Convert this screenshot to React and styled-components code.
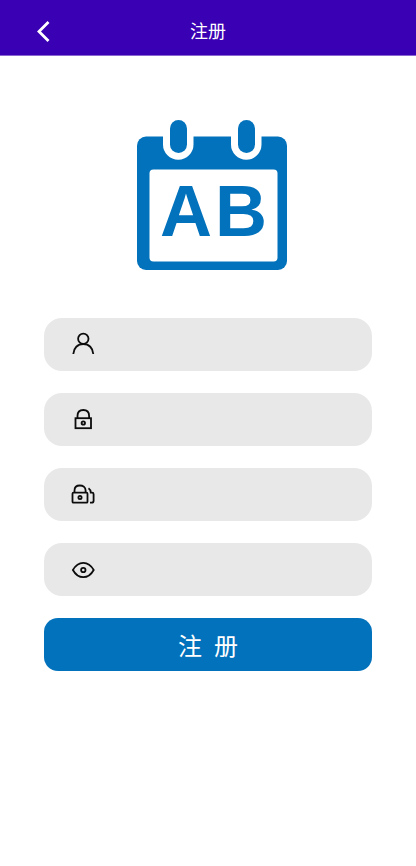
import React from "react";
import styled, { createGlobalStyle } from "styled-components";

const GlobalStyle = createGlobalStyle`
  * { box-sizing: border-box; }
  body {
    margin: 0;
    background: #fff;
    font-family: Roboto, "Noto Sans CJK SC", sans-serif;
  }
`;

const Header = styled.header`
  display: grid;
  grid-template-columns: 48px 1fr 48px;
  align-items: center;
  height: 56px;
  padding: 8px 20px 0;
  background: #3a00b3;
  border-bottom: 1px solid #8a66d0;
  color: #fff;
`;

const BackButton = styled.button`
  display: flex;
  align-items: center;
  justify-content: center;
  height: 42px;
  padding: 0;
  border: 0;
  background: none;
  color: inherit;
`;

const Title = styled.h1`
  margin: 0;
  font-size: 18px;
  line-height: 24px;
  font-weight: 400;
  text-align: center;
`;

const Main = styled.main`
  display: flex;
  flex-direction: column;
  align-items: center;
  gap: 48px;
  padding: 64px 44px;
`;

const Logo = styled.svg`
  display: block;
  margin-left: 8px;
`;

const LogoText = styled.text`
  font-family: "Liberation Sans", Arial, sans-serif;
  font-size: 72px;
  font-weight: 700;
  fill: #0272bc;
`;

const Form = styled.form`
  display: flex;
  flex-direction: column;
  gap: 22px;
  width: 100%;
`;

const Field = styled.label`
  display: flex;
  align-items: center;
  gap: 16px;
  height: 53px;
  padding: 0 27px;
  border-radius: 18px;
  background: #e8e8e8;
`;

const Icon = styled.svg`
  flex: none;
  width: 25px;
  height: 25px;
  fill: none;
  stroke: #0c0c0c;
  stroke-width: 1.8;
`;

const Input = styled.input`
  flex: 1;
  min-width: 0;
  border: 0;
  outline: 0;
  background: transparent;
  font: inherit;
  font-size: 16px;
`;

const Submit = styled.button`
  height: 53px;
  border: 0;
  border-radius: 14px;
  background: #0272bc;
  color: #fff;
  font: inherit;
  font-size: 24px;
  white-space: pre;
`;

const fields = [
  {
    name: "username",
    label: "用户名",
    type: "text",
    icon: (
      <>
        <circle cx="12.3" cy="6.8" r="5.2" />
        <path d="M2.3 22c.3-6 4.4-10 10-10s9.7 4 10 10" />
      </>
    ),
  },
  {
    name: "password",
    label: "密码",
    type: "password",
    icon: (
      <>
        <rect x="4.5" y="11.2" width="15.5" height="10" />
        <path d="M6.5 11.2V9c0-3.900 2.400-6 5.800-6s5.800 2.100 5.800 6v2.200" />
        <circle cx="12.3" cy="16" r="1.7" />
      </>
    ),
  },
  {
    name: "confirm",
    label: "确认密码",
    type: "password",
    icon: (
      <>
        <rect x="1.5" y="10.7" width="15" height="10" rx="1" />
        <path d="M3.500 10.700V8.500c0-3.200 2.200-5 5.300-5s5.800 1.800 5.800 5v2.200" />
        <circle cx="9" cy="15.5" r="1.6" />
        <path d="M17.5 6.200c1.500 1 2.300 2.600 2.300 4.500h1.300c.9 0 1.500.6 1.500 1.500v6.500c0 1.300-.8 2-2 2H19" />
      </>
    ),
  },
  {
    name: "code",
    label: "验证码",
    type: "text",
    icon: (
      <>
        <path d="M1.900 13C4.500 8.300 8 5.800 12.300 5.800S20.100 8.300 22.700 13c-2.600 4.700-6.100 7.200-10.400 7.200S4.500 17.700 1.900 13Z" />
        <circle cx="12.3" cy="13" r="2.2" />
      </>
    ),
  },
];

export default function App() {
  return (
    <>
      <GlobalStyle />
      <Header>
        <BackButton type="button" aria-label="返回">
          <svg width="24" height="24" viewBox="0 0 24 24" fill="none" stroke="currentColor" strokeWidth="2.8">
            <path d="M16.5 2 7 11.500 16.500 21" />
          </svg>
        </BackButton>
        <Title>注册</Title>
      </Header>
      <Main>
        <Logo width="150" height="150" viewBox="0 0 150 150" role="img" aria-label="AB">
          <rect y="16.5" width="150" height="133.5" rx="9" fill="#0272bc" />
          <path d="M26 14h30.500v10.500a15.250 15.250 0 0 1-30.500 0ZM94 14h30.500v10.500a15.250 15.250 0 0 1-30.500 0Z" fill="#fff" />
          <rect x="33" width="17" height="33" rx="8.5" fill="#0272bc" />
          <rect x="101" width="17" height="33" rx="8.5" fill="#0272bc" />
          <rect x="12.5" y="49.5" width="128" height="92" rx="4" fill="#fff" />
          <LogoText x="49" y="116" textAnchor="middle">A</LogoText>
          <LogoText x="104" y="116" textAnchor="middle">B</LogoText>
        </Logo>
        <Form onSubmit={(e) => e.preventDefault()}>
          {fields.map((f) => (
            <Field key={f.name}>
              <Icon viewBox="0 0 25 25" aria-hidden="true">{f.icon}</Icon>
              <Input name={f.name} type={f.type} aria-label={f.label} />
            </Field>
          ))}
          <Submit type="submit">{"注  册"}</Submit>
        </Form>
      </Main>
    </>
  );
}
